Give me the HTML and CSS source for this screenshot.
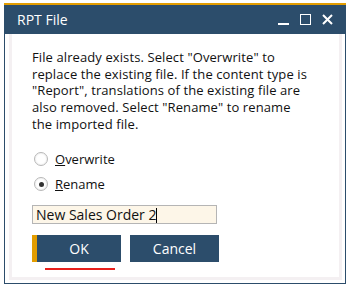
FILE: index.html
```html
<!DOCTYPE html>
<html lang="en">
<head>
  <meta charset="UTF-8" />
  <title>RPT File</title>
  <link rel="stylesheet" href="styles.css">
</head>
<body>
  <div class="window">
    <div class="titlebar">
      <span class="title">RPT File</span>
      <div class="controls">
        <span class="ctl ctl-min"></span>
        <span class="ctl ctl-max"></span>
        <svg class="ctl ctl-close" width="11" height="11" viewBox="0 0 11 11">
          <path d="M1 1L10 10M10 1L1 10" stroke="#fff" stroke-width="2"/>
        </svg>
      </div>
    </div>
    <div class="frame">
      <div class="content">
        <p class="msg">File already exists. Select "Overwrite" to<br>replace the existing file. If the content type is<br>"Report", translations of the existing file are<br>also removed. Select "Rename" to rename<br>the imported file.</p>
        <label class="option"><span class="radio"></span><span><u>O</u>verwrite</span></label>
        <label class="option"><span class="radio checked"></span><span><u>R</u>ename</span></label>
        <div class="field">New Sales Order 2<span class="caret"></span></div>
        <div class="buttons">
          <div class="btn-wrap">
            <button class="btn btn-primary">OK</button>
            <div class="focus-line"></div>
          </div>
          <button class="btn">Cancel</button>
        </div>
      </div>
    </div>
  </div>
</body>
</html>
```

FILE: styles.css
```css
* { box-sizing: border-box; }
body {
  margin: 0;
  background: #ffffff;
  font-family: 'Open Sans', sans-serif;
  font-size: 13px;
  color: #111;
}
.window {
  margin: 3px 0 0 4px;
  width: 342px;
  border-top: 2px solid #e39d00;
}
.titlebar {
  height: 29px;
  background: #2c4d6b;
  color: #ffffff;
  display: flex;
  align-items: center;
  justify-content: space-between;
  padding: 0 13px 0 13px;
}
.title {
  font-size: 14px;
}
.controls {
  display: flex;
  align-items: center;
  gap: 11px;
}
.ctl { display: block; }
.ctl-min {
  width: 11px;
  height: 2px;
  background: #fff;
  margin-top: 9px;
}
.ctl-max {
  width: 11px;
  height: 11px;
  border: 1.5px solid #fff;
}
.frame {
  border: 1px solid #2c4d6b;
  border-top: none;
  padding: 0 3px 3px 4px;
}
.content {
  border: 3px solid #f4f0f2;
  border-top: none;
  padding: 15px 20px 12px 20px;
  height: 246px;
}
.msg {
  margin: 0 0 18px 0;
  line-height: 16.7px;
  white-space: nowrap;
  letter-spacing: 0.1px;
}
.option {
  display: flex;
  align-items: center;
  gap: 7px;
  height: 17px;
  padding-left: 2px;
}
.option + .option { margin-top: 8px; }
.radio {
  width: 14px;
  height: 14px;
  border-radius: 50%;
  border: 1px solid #b8b8b8;
  background: #fff;
  box-shadow: inset 0 0 2px #ddd;
  display: flex;
  align-items: center;
  justify-content: center;
}
.radio.checked::after {
  content: "";
  width: 5px;
  height: 5px;
  border-radius: 50%;
  background: #333;
}
.field {
  margin-top: 12px;
  width: 185px;
  height: 19px;
  border: 1px solid #b5b5b5;
  background: #fdf6e8;
  padding: 0 3px;
  line-height: 17px;
  font-size: 14px;
}
.caret {
  display: inline-block;
  width: 1px;
  height: 15px;
  background: #000;
  vertical-align: middle;
}
.buttons {
  display: flex;
  gap: 9px;
  margin-top: 11px;
}
.btn {
  width: 89px;
  height: 27px;
  background: #2c4d6b;
  color: #fff;
  border: none;
  font-family: inherit;
  font-size: 14px;
  padding: 0;
}
.btn-primary {
  border-left: 5px solid #e39d00;
}
.focus-line {
  margin: 6px 0 0 13px;
  width: 70px;
  height: 2px;
  background: #e8201c;
}
```
